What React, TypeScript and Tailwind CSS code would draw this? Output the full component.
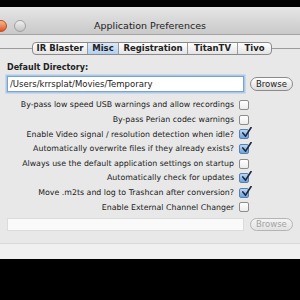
import React from "react";

const rows: { label: string; checked: boolean }[] = [
  { label: "By-pass low speed USB warnings and allow recordings", checked: false },
  { label: "By-pass Perian codec warnings", checked: false },
  { label: "Enable Video signal / resolution detection when idle?", checked: true },
  { label: "Automatically overwrite files if they already exists?", checked: true },
  { label: "Always use the default application settings on startup", checked: false },
  { label: "Automatically check for updates", checked: true },
  { label: "Move .m2ts and log to Trashcan after conversion?", checked: true },
  { label: "Enable External Channel Changer", checked: false },
];

const tabs = ["IR Blaster", "Misc", "Registration", "TitanTV", "Tivo"];
const tabWidths = ["w-[54px]", "w-[31px]", "w-[69px]", "w-[50px]", "w-[34px]"];

function Checkbox({ checked }: { checked: boolean }) {
  if (checked) {
    return (
      <div className="relative w-[10px] h-[10px] rounded-[2px] border border-[#5a7fb0] bg-gradient-to-b from-[#bcd6f2] to-[#6ea3dc]">
        <svg viewBox="0 0 12 12" className="absolute left-[1px] top-[-3px] w-[11px] h-[11px]">
          <path d="M2 6.5 L5 10 L11 0.5" fill="none" stroke="#1b2a44" strokeWidth="1.8" strokeLinecap="round" strokeLinejoin="round" />
        </svg>
      </div>
    );
  }
  return (
    <div className="w-[10px] h-[10px] rounded-[2px] border border-[#8c8c8c] bg-gradient-to-b from-[#ffffff] to-[#ececec]" />
  );
}

export default function App() {
  return (
    <div
      className="w-[300px] h-[300px] bg-black flex flex-col overflow-hidden"
      style={{ fontFamily: '"DejaVu Sans", "Liberation Sans", sans-serif' }}
    >
      <div className="h-[7px] shrink-0" />
      <div className="flex flex-col shrink-0">
        {/* title bar */}
        <div className="relative h-[28px] bg-gradient-to-b from-[#e6e6e6] to-[#c9c9c9] border-b border-[#a5a5a5] flex items-center justify-center">
          <div className="absolute left-[-5px] top-[13px] w-[12px] h-[12px] rounded-full bg-gradient-to-b from-[#f3b98c] to-[#e0521c] border border-[#b5502a]" />
          <div className="absolute left-[14px] top-[13px] w-[12px] h-[12px] rounded-full bg-gradient-to-b from-[#f0f0f0] to-[#c4c4c4] border border-[#a0a0a0]" />
          <span className="text-[9.5px] text-[#222] pt-[12px]">Application Preferences</span>
        </div>
        {/* content */}
        <div className="h-[208px] bg-[#e8e8e8] flex flex-col">
          <div className="mt-[7px] flex items-center h-[13px]">
            <div className="w-[32px] h-px bg-[#9a9a9a]" />
            <div className="flex h-[13px] border border-[#8a8a8a] rounded-[4px] overflow-hidden bg-gradient-to-b from-[#ffffff] to-[#e4e4e4]">
              {tabs.map((t, i) => (
                <div
                  key={t}
                  className={`${tabWidths[i]} flex items-center justify-center text-[8.5px] font-bold text-[#222] ${
                    i > 0 ? "border-l border-[#9a9a9a]" : ""
                  } ${t === "Misc" ? "bg-gradient-to-b from-[#dbe9f8] to-[#b3d0ef]" : ""}`}
                >
                  {t}
                </div>
              ))}
            </div>
            <div className="flex-1 h-px bg-[#9a9a9a]" />
          </div>
          <div className="mt-[8px] px-[7px] text-[8px] font-bold text-[#222] leading-[10px]">
            Default Directory:
          </div>
          <div className="mt-[3px] px-[7px] flex items-center gap-[6px]">
            <div className="w-[241px] h-[16px] bg-white border border-[#7da2ce] shadow-[0_0_0_1.5px_#a9c8ea] flex items-center px-[2px] text-[8.5px] text-[#222]">
              /Users/krrsplat/Movies/Temporary
            </div>
            <div className="w-[44px] h-[14px] rounded-full border border-[#8a8a8a] bg-gradient-to-b from-[#ffffff] to-[#dcdcdc] flex items-center justify-center text-[8.5px] text-[#222]">
              Browse
            </div>
          </div>
          <div className="mt-[6px] flex flex-col pr-[51px]">
            {rows.map((r) => (
              <div key={r.label} className="h-[14.6px] flex items-center justify-end gap-[5px]">
                <span className="text-[7.85px] text-[#222] whitespace-nowrap">{r.label}</span>
                <Checkbox checked={r.checked} />
              </div>
            ))}
          </div>
          <div className="mt-[3px] px-[7px] flex items-center gap-[6px]">
            <div className="w-[241px] h-[13px] bg-[#fafafa] border border-[#dcdcdc]" />
            <div className="w-[44px] h-[13px] rounded-full border border-[#b4b4b4] bg-gradient-to-b from-[#f4f4f4] to-[#e2e2e2] flex items-center justify-center text-[8.5px] text-[#a4a4a4]">
              Browse
            </div>
          </div>
        </div>
        {/* bottom strip */}
        <div className="h-[16px] bg-[#f0f0f0] border-t border-[#d8d8d8]" />
      </div>
    </div>
  );
}
